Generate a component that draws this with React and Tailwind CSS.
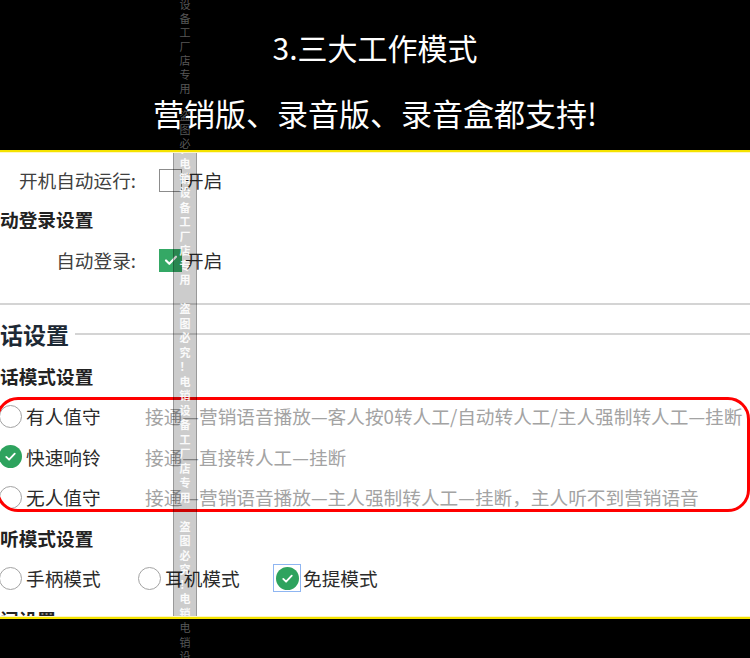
const WM = "电销设备工厂店专用 盗图必究！".split("");

function WatermarkChars({ cycles, slotClass }) {
  const items = [];
  for (let c = 0; c < cycles; c++) {
    WM.forEach((ch, i) => {
      items.push(
        <span key={c + "-" + i} className={`flex items-center justify-center ${slotClass}`}>
          {ch}
        </span>
      );
    });
  }
  return <div className="flex flex-col">{items}</div>;
}

const CheckMark = ({ className }) => (
  <svg viewBox="0 0 24 24" className={className} fill="none">
    <path d="M6 12.5l4 4 8-8.5" stroke="#fff" strokeWidth="2.6" strokeLinecap="round" strokeLinejoin="round" />
  </svg>
);

const Radio = ({ checked }) =>
  checked ? (
    <span className="flex h-[23px] w-[23px] items-center justify-center rounded-full bg-[#2ea35e]">
      <CheckMark className="h-[17px] w-[17px]" />
    </span>
  ) : (
    <span className="block h-[23px] w-[23px] rounded-full border-[1.5px] border-[#a3a3a3] bg-white" />
  );

const ModeRow = ({ name, desc, checked }) => (
  <div className="flex h-[40.5px] items-center">
    <div className="-ml-[1px] flex w-[146px] items-center">
      <Radio checked={checked} />
      <span className="ml-[4px] text-[18.67px] text-[#2b2b2b]">{name}</span>
    </div>
    <span className="whitespace-nowrap text-[18.67px] text-[#a3a3a3]">{desc}</span>
  </div>
);

export default function App() {
  return (
    <div className="relative h-[658px] w-[750px] overflow-hidden bg-black font-['Noto_Sans_CJK_SC','Noto_Sans',sans-serif]">
      {/* banner */}
      <header className="relative flex h-[150px] flex-col items-center overflow-hidden">
        <h1 className="mt-[28px] text-[30px] leading-[38px] text-white">3.三大工作模式</h1>
        <p className="mt-[28px] text-[31px] leading-[38px] text-white">营销版、录音版、录音盒都支持!</p>
        <div className="absolute left-[174px] top-[-30px] w-[22px] text-[11px] leading-none text-white/35">
          <WatermarkChars cycles={2} slotClass="h-[13.9px]" />
        </div>
      </header>
      <div className="h-[2px] bg-[#f5e300]" />
      <div className="h-px bg-[#fdf6c4]" />

      {/* settings screenshot */}
      <main className="relative h-[463px] overflow-hidden bg-white">
        <div className="flex flex-col">
          <div className="mt-[8px] flex h-[38px] items-center">
            <span className="w-[136px] text-right text-[18.67px] text-[#404040]">开机自动运行:</span>
            <span className="ml-[23px] block h-[23px] w-[23px] border-[1.5px] border-[#8c8c8c] bg-white" />
            <span className="ml-[3px] text-[18.67px] text-[#2b2b2b]">开启</span>
          </div>
          <div className="flex h-[40px] items-center">
            <span className="-ml-[18.67px] text-[18.67px] font-bold text-[#222]">自动登录设置</span>
          </div>
          <div className="flex h-[42px] items-center">
            <span className="w-[136px] text-right text-[18.67px] text-[#404040]">自动登录:</span>
            <span className="ml-[23px] flex h-[23px] w-[23px] items-center justify-center bg-[#34a865]">
              <CheckMark className="h-[20px] w-[20px]" />
            </span>
            <span className="ml-[3px] text-[18.67px] text-[#2b2b2b]">开启</span>
          </div>
          <div className="mt-[22px] h-[2px] bg-[#d4d4d4]" />
          <div className="flex h-[51px] items-center pt-[7px]">
            <span className="-ml-[23px] text-[23px] font-semibold text-[#1d2935]">通话设置</span>
            <span className="ml-[6px] h-[2px] flex-1 bg-[#d4d4d4]" />
          </div>
          <div className="flex h-[40px] items-center">
            <span className="-ml-[18.67px] text-[18.67px] font-bold text-[#222]">通话模式设置</span>
          </div>
          <ModeRow
            name="有人值守"
            desc="接通—营销语音播放—客人按0转人工/自动转人工/主人强制转人工—挂断"
          />
          <ModeRow name="快速响铃" desc="接通—直接转人工—挂断" checked />
          <ModeRow name="无人值守" desc="接通—营销语音播放—主人强制转人工—挂断，主人听不到营销语音" />
          <div className="flex h-[40.5px] items-center">
            <span className="-ml-[18.67px] text-[18.67px] font-bold text-[#222]">接听模式设置</span>
          </div>
          <div className="flex h-[40.5px] items-center">
            <div className="-ml-[1px] flex w-[139px] items-center">
              <Radio />
              <span className="ml-[4px] text-[18.67px] text-[#2b2b2b]">手柄模式</span>
            </div>
            <div className="flex w-[135px] items-center">
              <Radio />
              <span className="ml-[4px] text-[18.67px] text-[#2b2b2b]">耳机模式</span>
            </div>
            <div className="flex items-center">
              <span className="flex h-[28px] w-[28px] items-center justify-center border-[1.5px] border-[#8fb6f2]">
                <Radio checked />
              </span>
              <span className="ml-[2px] text-[18.67px] text-[#2b2b2b]">免提模式</span>
            </div>
          </div>
          <div className="flex h-[40.5px] items-center">
            <span className="-ml-[18.67px] text-[18.67px] font-bold text-[#222]">访问设置</span>
          </div>
        </div>

        {/* red annotation */}
        <div className="pointer-events-none absolute left-[-4px] top-[244px] h-[115px] w-[754px] rounded-[22px] border-[3px] border-[#ff0000]" />

        {/* watermark strip */}
        <div className="pointer-events-none absolute inset-y-0 left-[173px] w-[24px] overflow-hidden border-x border-black/25 bg-black/20">
          <div className="absolute left-0 top-[-214px] w-[22px] text-[11px] font-bold leading-none text-white/90">
            <WatermarkChars cycles={4} slotClass="h-[14.5px]" />
          </div>
        </div>
      </main>

      <div className="h-px bg-[#fdf6c4]" />
      <div className="h-[2px] bg-[#f5e300]" />
      <footer className="relative h-[39px] overflow-hidden">
        <div className="absolute left-[174px] top-[-216px] w-[22px] text-[11px] leading-none text-white/35">
          <WatermarkChars cycles={2} slotClass="h-[14.5px]" />
        </div>
      </footer>
    </div>
  );
}
